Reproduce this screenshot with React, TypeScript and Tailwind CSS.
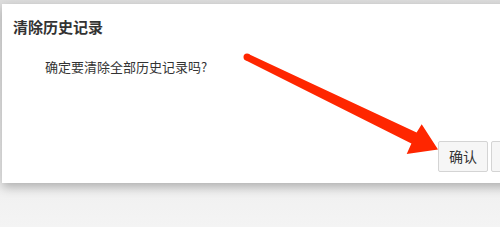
export default function App() {
  return (
    <div
      className="relative w-[500px] h-[227px] overflow-hidden bg-gradient-to-b from-[#dedede] to-[#f4f4f4] pt-[4px] pl-[2px]"
      style={{ fontFamily: '"Noto Sans CJK SC", "Noto Sans", sans-serif' }}
    >
      {/* Dialog */}
      <div className="flex flex-col w-[549px] h-[179px] bg-white shadow-[0_4px_10px_rgba(0,0,0,0.28)]">
        <div className="pl-[11px] pt-[13px] text-[15px] leading-[20px] font-bold text-[#333]">
          清除历史记录
        </div>
        <div className="pl-[43px] mt-[20px] text-[13px] leading-[20px] text-[#333]">
          确定要清除全部历史记录吗?
        </div>
        <div className="flex justify-end gap-[3px] pr-[10px] mt-auto mb-[11px]">
          <button className="w-[50px] h-[31px] rounded-[2px] border border-[#d4d4d4] bg-[#f6f6f6] text-[14px] text-[#333]">
            确认
          </button>
          <button className="w-[50px] h-[31px] rounded-[2px] border border-[#d4d4d4] bg-[#f6f6f6] text-[14px] text-[#333]">
            取消
          </button>
        </div>
      </div>

      {/* Annotation arrow */}
      <svg className="absolute left-0 top-0" width="500" height="227" viewBox="0 0 500 227">
        <polygon
          points="245.5,60.2 248.5,53.9 416.6,132.6 421.7,124.3 438,149.5 406.7,154 411.4,143.4"
          fill="#ff2600"
        />
        <circle cx="247" cy="57" r="3.5" fill="#ff2600" />
      </svg>
    </div>
  );
}
